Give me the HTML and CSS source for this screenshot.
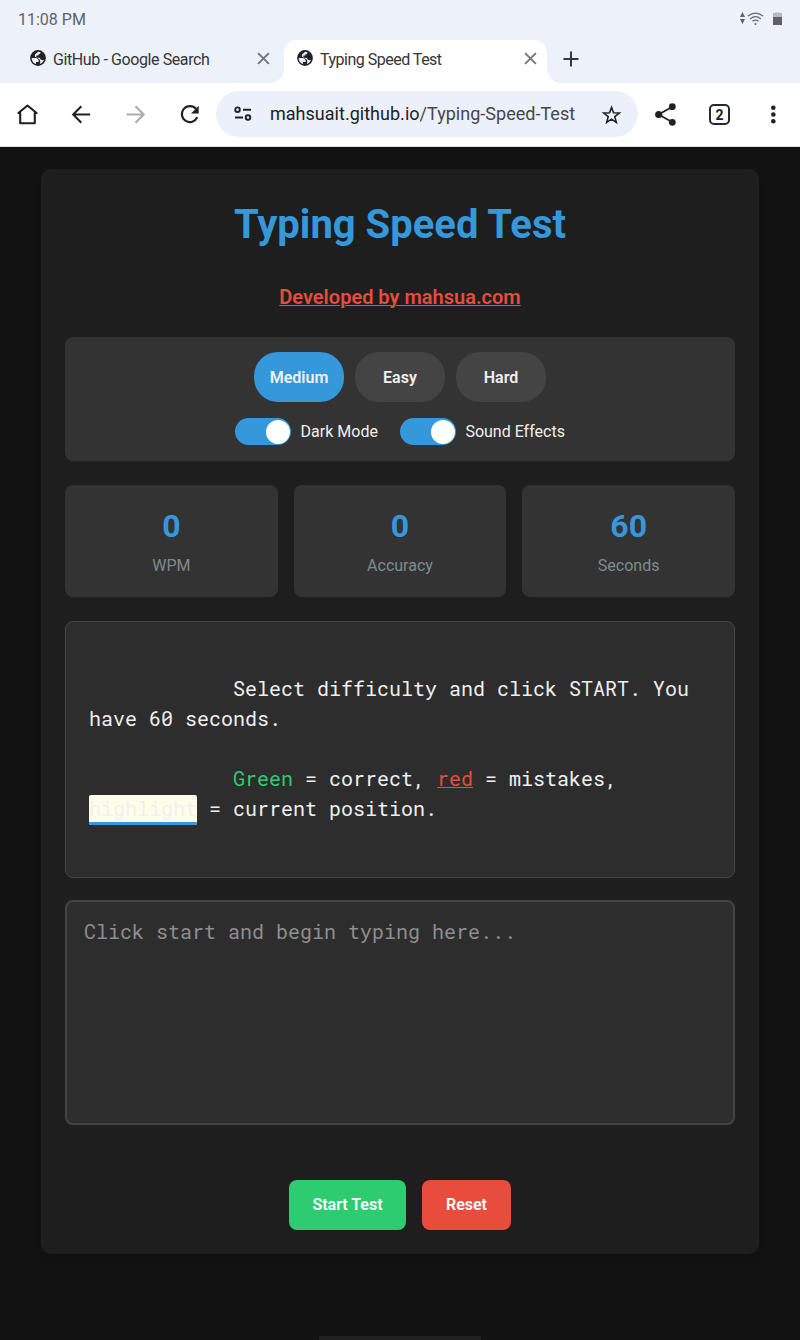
FILE: index.html
```html
<!DOCTYPE html>
<html lang="en">
<head>
<meta charset="utf-8">
<title>Typing Speed Test</title>
<link rel="stylesheet" href="styles.css">
</head>
<body>
<svg class="defs" width="0" height="0">
  <symbol id="globe" viewBox="0 0 16 16">
    <circle cx="8" cy="8" r="7.900" fill="#202124"/>
    <path d="M1.700 8H5.100C7.800 8 9 9.400 8.700 12.100H6V14.100A6.300 6.300 0 0 1 1.700 8Z" fill="#edf1fa"/>
    <path d="M8 1.700C9 1.700 9.800 1.900 10.500 2.200 10.500 3.500 9.800 4.300 8.400 4.300V5.400H6.300C6 7.100 6.700 7.800 8.200 7.800 9.700 7.800 10 8.300 10.300 9.100 10.900 10.300 12.200 10.500 14 9.800 13.300 12.200 11.600 13.600 9.800 14.100 10.900 11.500 10.200 9.200 7.900 8.200L5 6.700C4.600 5.500 5 4.300 6.200 3.600Z" fill="#edf1fa"/>
  </symbol>
  <symbol id="close" viewBox="0 0 12 12"><path d="M1 1 11 11M11 1 1 11" stroke="#75777b" stroke-width="1.8"/></symbol>
</svg>

<header class="browser">
  <div class="status">
    <span class="clock">11:08 PM</span>
    <svg class="signals" width="42" height="14" viewBox="0 0 42 14">
      <path d="M2.500 0 5 5H0ZM0 7h5L2.500 12Z" fill="#5f6164"/>
      <g fill="none" stroke="#67696d" stroke-width="1.250">
        <path d="M8 4.100Q15.500-1.900 23 4.100"/><path d="M10.200 6.900Q15.500 2.500 20.800 6.900"/><path d="M12.500 9.300Q15.500 7 18.500 9.300"/>
      </g>
      <circle cx="15.500" cy="11.900" r="1" fill="#5f6164"/>
      <path d="M33 1h2V.4h5V1h2v12h-9Z" fill="#b8bac0"/><path d="M33 5h9v8h-9Z" fill="#5f6164"/>
    </svg>
  </div>
  <nav class="tabs">
    <div class="tab">
      <svg class="globe"><use href="#globe"/></svg><span class="tab-title">GitHub - Google Search</span><svg class="close"><use href="#close"/></svg>
    </div>
    <div class="tab active">
      <svg class="globe"><use href="#globe"/></svg><span class="tab-title">Typing Speed Test</span><svg class="close"><use href="#close"/></svg>
    </div>
    <svg class="plus" width="16" height="16" viewBox="0 0 16 16"><path d="M8 .5v15M.5 8h15" stroke="#36383b" stroke-width="2"/></svg>
  </nav>
  <div class="toolbar">
    <svg class="icon" viewBox="0 0 24 24"><path d="M4.200 11H2.400L11.500 3.500 20.600 11h-1.800v10.300H4.200Z" stroke-linejoin="round"/></svg>
    <svg class="icon" viewBox="0 0 24 24"><path d="M20.200 12.500H3.500M11.300 4.300 3.200 12.500l8.100 8.200"/></svg>
    <svg class="icon faded" viewBox="0 0 24 24"><path d="M2.700 12.500h17M11.500 4.300 19.700 12.500l-8.200 8.200"/></svg>
    <svg class="icon" viewBox="0 0 24 24"><path d="M18 6.900A8 8 0 1 0 19.300 15.200"/><path d="M20.700 3.800v7.700H13Z" class="solid"/></svg>
    <div class="address">
      <svg class="tune" width="18" height="16" viewBox="0 0 18 16"><g fill="none" stroke="#202124" stroke-width="1.900"><circle cx="3.500" cy="3.700" r="2.300"/><path d="M9 3.700h8M1 11.500h8"/><circle cx="14" cy="11.500" r="2.300"/></g></svg>
      <span class="url">mahsuait.github.io<span class="path">/Typing-Speed-Test</span></span>
      <svg class="star" width="20" height="20" viewBox="0 0 20 20"><path d="m10.500 2.400 2 5.300 5.800.3-4.500 3.600 1.500 5.700-4.800-3.200-4.800 3.200 1.500-5.700L2.700 8l5.800-.3Z" fill="none" stroke="#202124" stroke-width="1.600"/></svg>
    </div>
    <svg class="icon" viewBox="0 0 24 24"><path d="M18.500 4.700 4.500 12.500l14 7.800" stroke-width="1.700"/><g class="solid"><circle cx="18.300" cy="4.700" r="3.400"/><circle cx="4.700" cy="12.500" r="3.600"/><circle cx="18.300" cy="20.300" r="3.400"/></g></svg>
    <span class="count">2</span>
    <svg class="icon" viewBox="0 0 24 24"><g class="solid"><circle cx="12.300" cy="5.700" r="2.300"/><circle cx="12.300" cy="12.500" r="2.300"/><circle cx="12.300" cy="19.300" r="2.300"/></g></svg>
  </div>
</header>

<main class="container">
  <h1>Typing Speed Test</h1>
  <a class="credit">Developed by mahsua.com</a>
  <section class="controls">
    <div class="levels">
      <button class="level selected">Medium</button>
      <button class="level">Easy</button>
      <button class="level">Hard</button>
    </div>
    <div class="switches">
      <label class="switch"><span class="track"><span class="knob"></span></span>Dark Mode</label>
      <label class="switch"><span class="track"><span class="knob"></span></span>Sound Effects</label>
    </div>
  </section>
  <section class="stats">
    <div class="stat"><b>0</b><span>WPM</span></div>
    <div class="stat"><b>0</b><span>Accuracy</span></div>
    <div class="stat"><b>60</b><span>Seconds</span></div>
  </section>
  <section class="sample">
            Select difficulty and click START. You have 60 seconds.

            <span class="correct">Green</span> = correct, <span class="wrong">red</span> = mistakes, <span class="current">highlight</span> = current position.
</section>
  <textarea class="entry" placeholder="Click start and begin typing here..."></textarea>
  <div class="actions">
    <button class="start">Start Test</button>
    <button class="reset">Reset</button>
  </div>
</main>
<div class="gesture"></div>
</body>
</html>
```

FILE: styles.css
```css
* { box-sizing: border-box; }
body {
  margin: 0;
  height: 1340px;
  overflow: hidden;
  background: #121212;
  color: #f0f0f0;
  font-family: Roboto, sans-serif;
  display: flex;
  flex-direction: column;
}
button { border: 0; font-family: inherit; padding: 0; }
.defs { position: absolute; }

.browser { height: 147px; background: #edf1fa; flex: none; }
.status { height: 40px; display: flex; justify-content: space-between; padding: 0 18px 1px; align-items: center; }
.clock { font-size: 16px; color: #606266; }
.signals { margin-top: -1px; }
.tabs { height: 43px; display: flex; align-items: center; }
.tab { display: flex; align-items: center; height: 43px; width: 284px; padding: 0 14px 6px 30px; }
.tab.active { width: 263px; padding: 0 10px 6px 13px; background: #fff; border-radius: 13px 13px 0 0; position: relative; }
.tab.active::before, .tab.active::after {
  content: "";
  position: absolute;
  bottom: 0;
  width: 14px;
  height: 14px;
  background: radial-gradient(circle at 0 0, transparent 13.5px, #fff 14px);
}
.tab.active::before { left: -14px; }
.tab.active::after { right: -14px; transform: scaleX(-1); }
.globe { width: 16px; height: 16px; margin: -1px 7px 0 0; flex: none; }
.tab-title { flex: 1; padding-top: 1px; font-size: 16px; color: #333538; white-space: nowrap; letter-spacing: -.4px; }
.active .tab-title { letter-spacing: -.5px; }
.close { width: 13px; height: 13px; flex: none; }
.plus { margin: -6px 0 0 16px; }
.toolbar { height: 64px; background: #fff; border-bottom: 1px solid #dcdddf; display: flex; align-items: center; padding: 0 15px 1px 16px; }
.icon { width: 24px; height: 24px; margin-right: 30px; flex: none; fill: none; stroke: #202124; stroke-width: 2.1; overflow: visible; }
.icon:last-child { margin: 0; }
.icon .solid { fill: #202124; stroke: none; }
.faded { opacity: .38; }
.address { width: 422px; height: 46px; border-radius: 23px; background: #ebf0fa; margin-left: -16px; margin-right: 16px; display: flex; align-items: center; padding: 0 17px; }
.tune { margin-left: 1px; }
.url { flex: 1; margin-left: 18px; margin-top: -1px; font-size: 18px; color: #202124; white-space: nowrap; letter-spacing: .02px; }
.path { color: #44474a; }
.star { margin-top: 2px; }
.count { width: 21px; height: 21px; flex: none; border: 2px solid #26282a; border-radius: 5px; margin: 1px 31px 0 1px; display: flex; align-items: center; justify-content: center; font-size: 14px; font-weight: 700; color: #202124; }

.container { width: 718px; height: 1085px; flex: none; margin: 22px auto 0; padding: 24px; background: #1e1e1e; border-radius: 10px; box-shadow: 0 4px 6px rgba(0, 0, 0, .1); display: flex; flex-direction: column; }
h1 { margin: 0; height: 62px; line-height: 64px; text-align: center; color: #3498db; font-size: 40px; font-weight: 700; }
.credit { align-self: center; margin-top: 26px; height: 32px; line-height: 32px; color: #e74c3c; font-size: 20px; font-weight: 600; text-decoration: underline; text-decoration-thickness: 1px; }
.controls { height: 124px; margin-top: 24px; padding-top: 15px; background: #333; border-radius: 8px; }
.levels { display: flex; justify-content: center; gap: 11px; }
.level { width: 90px; height: 50px; border-radius: 24px; background: #444; color: #f0f0f0; font-size: 16px; font-weight: 600; }
.level.selected { background: #3498db; }
.switches { display: flex; justify-content: center; gap: 22px; margin-top: 16px; }
.switch { display: flex; align-items: center; gap: 9.5px; font-size: 16px; height: 27px; }
.track { width: 56px; height: 27px; border-radius: 14px; background: #3498db; display: flex; align-items: center; justify-content: flex-end; padding-right: 1px; }
.knob { width: 24px; height: 24px; border-radius: 50%; background: #fff; }
.stats { margin-top: 24px; display: grid; grid-template-columns: repeat(3, 1fr); gap: 16px; }
.stat { height: 112px; background: #333; border-radius: 8px; text-align: center; display: flex; flex-direction: column; padding-top: 16px; }
.stat b { font-size: 32px; line-height: 51px; font-weight: 700; color: #3498db; }
.stat span { font-size: 16px; line-height: 28px; color: #7f8c8d; }
.sample, .entry { font-family: "Roboto Mono", "DejaVu Sans Mono", monospace; font-size: 20px; line-height: 30px; background: #2d2d2d; color: #f0f0f0; border-radius: 8px; }
.sample { height: 257px; margin-top: 24px; border: 1px solid #444; padding: 21px 23px; white-space: pre-wrap; }
.correct { color: #2ecc71; }
.wrong { color: #e74c3c; text-decoration: underline; text-decoration-thickness: 1px; }
.current { background: #fffde7; padding-bottom: 1px; border-bottom: 3px solid #3498db; border-radius: 2px; }
.entry { height: 225px; margin-top: 22px; border: 2px solid #444; padding: 14px 17px; resize: none; flex: none; }
.entry::placeholder { color: #8e8e8e; opacity: 1; }
.actions { margin-top: 55px; display: flex; justify-content: center; gap: 16px; }
.actions button { height: 50px; border-radius: 8px; color: #fff; font-size: 16px; font-weight: 600; padding-bottom: 2px; }
.start { width: 117px; background: #2ecc71; }
.reset { width: 89px; background: #e74c3c; }
.gesture { width: 162px; height: 4px; margin: auto auto 0; background: #202124; border-radius: 2px 2px 0 0; }
```
